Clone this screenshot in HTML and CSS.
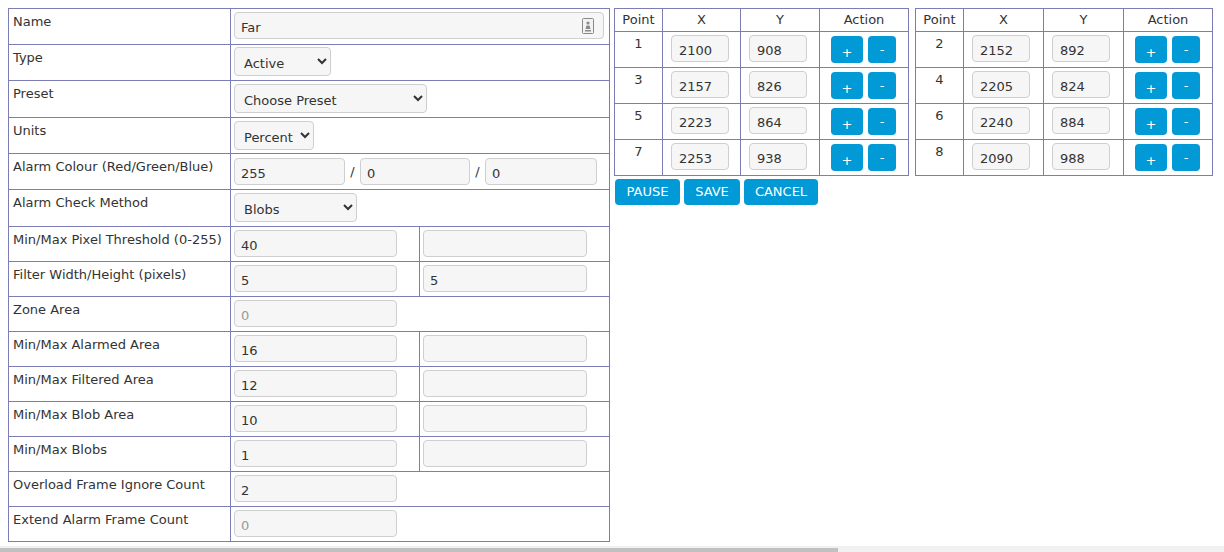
FILE: index.html
```html
<!DOCTYPE html>
<html>
<head>
<meta charset="utf-8">
<link rel="stylesheet" href="styles.css">
</head>
<body>
<div class="page">
  <table class="zone">
    <colgroup><col class="c-label"><col class="c-v1"><col class="c-v2"></colgroup>
    <tr class="h36">
      <th>Name</th>
      <td colspan="2"><div class="namewrap"><input class="inp w-full" value="Far"><svg class="keyicon" width="12" height="16" viewBox="0 0 12 16"><rect x="0.5" y="0.5" width="11" height="15" rx="1" fill="#f2f2f2" stroke="#8a8a8a"/><circle cx="6" cy="5" r="1.6" fill="#8a8a8a"/><path d="M3.5 11 L4.5 7.5 H7.5 L8.5 11 Z" fill="#8a8a8a"/><rect x="3" y="12" width="6" height="1.5" fill="#8a8a8a"/></svg></div></td>
    </tr>
    <tr class="h36 selrow">
      <th>Type</th>
      <td colspan="2"><select class="sel w-type"><option>Active</option></select></td>
    </tr>
    <tr class="h37">
      <th>Preset</th>
      <td colspan="2"><select class="sel w-preset"><option>Choose Preset</option></select></td>
    </tr>
    <tr class="h36">
      <th>Units</th>
      <td colspan="2"><select class="sel w-units"><option>Percent</option></select></td>
    </tr>
    <tr class="h36">
      <th>Alarm Colour (Red/Green/Blue)</th>
      <td colspan="2" class="low"><div class="rgb"><input class="inp w-rgb" value="255"><span class="slash">/</span><input class="inp w-rgb2" value="0"><span class="slash">/</span><input class="inp w-rgb3" value="0"></div></td>
    </tr>
    <tr class="h37">
      <th>Alarm Check Method</th>
      <td colspan="2"><select class="sel w-check"><option>Blobs</option></select></td>
    </tr>
    <tr>
      <th>Min/Max Pixel Threshold (0-255)</th>
      <td><input class="inp w-half" value="40"></td>
      <td><input class="inp w-half2" value=""></td>
    </tr>
    <tr>
      <th>Filter Width/Height (pixels)</th>
      <td><input class="inp w-half" value="5"></td>
      <td><input class="inp w-half2" value="5"></td>
    </tr>
    <tr>
      <th>Zone Area</th>
      <td colspan="2"><input class="inp w-half dis" value="0" disabled></td>
    </tr>
    <tr>
      <th>Min/Max Alarmed Area</th>
      <td><input class="inp w-half" value="16"></td>
      <td><input class="inp w-half2" value=""></td>
    </tr>
    <tr>
      <th>Min/Max Filtered Area</th>
      <td><input class="inp w-half" value="12"></td>
      <td><input class="inp w-half2" value=""></td>
    </tr>
    <tr>
      <th>Min/Max Blob Area</th>
      <td><input class="inp w-half" value="10"></td>
      <td><input class="inp w-half2" value=""></td>
    </tr>
    <tr>
      <th>Min/Max Blobs</th>
      <td><input class="inp w-half" value="1"></td>
      <td><input class="inp w-half2" value=""></td>
    </tr>
    <tr>
      <th>Overload Frame Ignore Count</th>
      <td colspan="2"><input class="inp w-half" value="2"></td>
    </tr>
    <tr>
      <th>Extend Alarm Frame Count</th>
      <td colspan="2"><input class="inp w-half dis" value="0" disabled></td>
    </tr>
  </table>

  <div class="right">
    <div class="points">
      <table class="pts pts-a">
        <colgroup><col class="p-n"><col class="p-x"><col class="p-y"><col class="p-a"></colgroup>
        <tr class="hd"><th>Point</th><th>X</th><th>Y</th><th>Action</th></tr>
        <tr><td class="num">1</td><td><input class="inp pin" value="2100"></td><td><input class="inp pin" value="908"></td><td><div class="acts"><button class="btn plus">+</button><button class="btn minus">-</button></div></td></tr>
        <tr><td class="num">3</td><td><input class="inp pin" value="2157"></td><td><input class="inp pin" value="826"></td><td><div class="acts"><button class="btn plus">+</button><button class="btn minus">-</button></div></td></tr>
        <tr><td class="num">5</td><td><input class="inp pin" value="2223"></td><td><input class="inp pin" value="864"></td><td><div class="acts"><button class="btn plus">+</button><button class="btn minus">-</button></div></td></tr>
        <tr><td class="num">7</td><td><input class="inp pin" value="2253"></td><td><input class="inp pin" value="938"></td><td><div class="acts"><button class="btn plus">+</button><button class="btn minus">-</button></div></td></tr>
      </table>
      <table class="pts pts-b">
        <colgroup><col class="p-n"><col class="p-x2"><col class="p-y2"><col class="p-a"></colgroup>
        <tr class="hd"><th>Point</th><th>X</th><th>Y</th><th>Action</th></tr>
        <tr><td class="num">2</td><td><input class="inp pin" value="2152"></td><td><input class="inp pin" value="892"></td><td><div class="acts"><button class="btn plus">+</button><button class="btn minus">-</button></div></td></tr>
        <tr><td class="num">4</td><td><input class="inp pin" value="2205"></td><td><input class="inp pin" value="824"></td><td><div class="acts"><button class="btn plus">+</button><button class="btn minus">-</button></div></td></tr>
        <tr><td class="num">6</td><td><input class="inp pin" value="2240"></td><td><input class="inp pin" value="884"></td><td><div class="acts"><button class="btn plus">+</button><button class="btn minus">-</button></div></td></tr>
        <tr><td class="num">8</td><td><input class="inp pin" value="2090"></td><td><input class="inp pin" value="988"></td><td><div class="acts"><button class="btn plus">+</button><button class="btn minus">-</button></div></td></tr>
      </table>
    </div>
    <div class="cmds">
      <button class="btn cmd w-pause">PAUSE</button>
      <button class="btn cmd w-save">SAVE</button>
      <button class="btn cmd w-cancel">CANCEL</button>
    </div>
  </div>
</div>
<div class="hscroll"><div class="thumb"></div></div>
</body>
</html>
```
FILE: styles.css
```css
html, body {
  margin: 0;
  padding: 0;
  background: #fff;
  overflow: hidden;
}
body {
  height: 552px;
  font-family: "DejaVu Sans", Verdana, sans-serif;
  font-size: 13px;
  color: #333;
}
.page {
  display: flex;
  align-items: flex-start;
  gap: 4px;
  padding: 8px 0 0 8px;
}
table {
  border-collapse: collapse;
}
.zone {
  table-layout: fixed;
  width: 601px;
  border: 1px solid #7d7db5;
}
.c-label { width: 222px; }
.c-v1 { width: 189px; }
.c-v2 { width: 190px; }
.zone tr { height: 35px; }
.zone tr.h36 { height: 36px; }
.zone tr.h37 { height: 37px; }
.zone th, .zone td {
  border: 1px solid #7d7db5;
  box-sizing: border-box;
}
.zone th {
  font-weight: normal;
  text-align: left;
  vertical-align: top;
  padding: 5px 4px 0 4px;
  line-height: 16px;
  white-space: nowrap;
}
.zone td {
  padding: 3px 3px 0 3px;
  vertical-align: top;
}
.zone tr.selrow td {
  padding-top: 2px;
}
.zone td.low {
  padding-top: 4px;
}
.inp {
  display: block;
  box-sizing: border-box;
  height: 27px;
  margin: 0;
  border: 1px solid #cfcfcf;
  border-radius: 4px;
  background: #f6f6f6;
  font-family: "DejaVu Sans", Verdana, sans-serif;
  font-size: 13px;
  color: #333;
  padding: 4px 6px 0 6px;
  outline: none;
}
.inp.dis { color: #999; }
.w-full { width: 370px; }
.w-half { width: 163px; }
.w-half2 { width: 164px; }
.namewrap {
  position: relative;
  width: 370px;
}
.keyicon {
  position: absolute;
  right: 10px;
  top: 6px;
}
.rgb {
  display: flex;
  align-items: center;
}
.w-rgb { width: 111px; }
.w-rgb2 { width: 110px; }
.w-rgb3 { width: 112px; }
.slash {
  width: 15px;
  text-align: center;
  color: #333;
}
.sel {
  display: block;
  box-sizing: border-box;
  height: 29px;
  margin: 0;
  border: 1px solid #cfcfcf;
  border-radius: 4px;
  background-color: #f6f6f6;
  font-family: "DejaVu Sans", Verdana, sans-serif;
  font-size: 13px;
  color: #333;
  padding: 4px 4px 0 5px;
}
.w-type { width: 97px; }
.w-preset { width: 193px; }
.w-units { width: 80px; }
.w-check { width: 123px; }

.right {
  display: flex;
  flex-direction: column;
  gap: 3px;
}
.points {
  display: flex;
  gap: 6px;
  align-items: flex-start;
}
.pts {
  table-layout: fixed;
  border: 1px solid #7d7db5;
}
.pts-a { width: 294px; }
.pts-b { width: 297px; }
.p-n { width: 48px; }
.p-x { width: 78px; }
.p-y { width: 79px; }
.p-x2 { width: 80px; }
.p-y2 { width: 80px; }
.p-a { width: 89px; }
.pts tr { height: 36px; }
.pts tr.hd { height: 23px; }
.pts th, .pts td {
  border: 1px solid #7d7db5;
  text-align: center;
  box-sizing: border-box;
}
.pts th {
  font-weight: normal;
  padding: 0;
  line-height: 20px;
  vertical-align: middle;
}
.pts td {
  padding: 3px 0 0 0;
  vertical-align: top;
}
.pts td.num {
  padding-top: 4px;
  line-height: 16px;
}
.pin {
  width: 58px;
  margin: 0 0 0 8px;
  text-align: left;
  padding-left: 7px;
}
.acts {
  display: flex;
  justify-content: flex-start;
  gap: 5px;
  padding: 1px 0 0 11px;
}
.btn {
  box-sizing: border-box;
  border: none;
  border-radius: 4px;
  background: #0199d6;
  color: #fff;
  font-family: "DejaVu Sans", Verdana, sans-serif;
  font-size: 13px;
  margin: 0;
  padding: 0;
  cursor: pointer;
}
.plus {
  width: 32px;
  height: 27px;
  padding-top: 5px;
}
.minus {
  width: 28px;
  height: 27px;
}
.cmds {
  display: flex;
  gap: 4px;
  padding-left: 1px;
}
.cmd {
  height: 26px;
  line-height: 26px;
}
.w-pause { width: 65px; }
.w-save { width: 56px; }
.w-cancel { width: 74px; }

.hscroll {
  position: fixed;
  left: 0;
  right: 0;
  bottom: 0;
  height: 6px;
  background: #f1f1f1;
}
.hscroll .thumb {
  position: absolute;
  left: 0;
  bottom: 0;
  width: 838px;
  height: 4px;
  background: #c1c1c1;
}
```
